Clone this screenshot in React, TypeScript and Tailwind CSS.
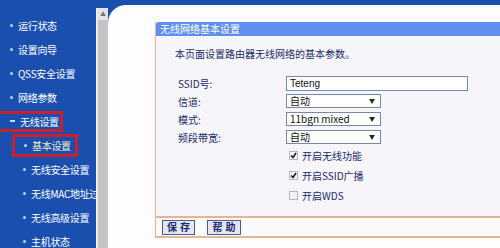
const cjk = { fontFamily: '"Noto Sans CJK SC", "Liberation Sans", sans-serif' };

const menu = [
  { label: '运行状态', level: 0 },
  { label: '设置向导', level: 0 },
  { label: 'QSS安全设置', level: 0 },
  { label: '网络参数', level: 0 },
  { label: '无线设置', level: 0, open: true, boxed: true },
  { label: '基本设置', level: 1, boxed: true, active: true },
  { label: '无线安全设置', level: 1 },
  { label: '无线MAC地址过滤', level: 1 },
  { label: '无线高级设置', level: 1 },
  { label: '主机状态', level: 1 },
];

function Sidebar() {
  return (
    <div className="w-[96px] shrink-0 bg-[#1a4fb0] pt-[13px] overflow-hidden">
      {menu.map((item) => {
        const marker = item.open ? (
          <span className="w-[5px] h-[2px] bg-[#cfe0ff] shrink-0" />
        ) : (
          <span className="w-[3px] h-[3px] rounded-full bg-[#bcd6ff] shrink-0" />
        );
        const inner = (
          <span className={`flex items-center gap-[5px] ${item.level ? 'pl-[9px]' : 'pl-[10px]'}`}>
            {marker}
            <span className={`whitespace-nowrap tracking-[-0.3px] ${item.active ? 'text-[#f4f0c0]' : 'text-white'}`}>{item.label}</span>
          </span>
        );
        return (
          <div key={item.label} className={`h-6 flex items-center ${item.level ? 'pl-[14px]' : ''}`}>
            {item.boxed ? (
              <span
                className={`flex items-center border-[3px] border-[#c8202c] ${
                  item.level ? 'w-[66px] h-[23px] -ml-[2px]' : 'w-[66px] h-[21px] -ml-[3px]'
                }`}
              >
                {inner}
              </span>
            ) : (
              inner
            )}
          </div>
        );
      })}
    </div>
  );
}

function Scrollbar() {
  return (
    <div className="w-[12px] shrink-0 bg-[#1a4fb0] flex flex-col pt-[8px]">
      <div className="flex-1 flex flex-col bg-[#d6d6d6] border-l-[2px] border-[#ececec]">
        <div className="h-[12px] flex items-center justify-center bg-[#e4e4e4]">
          <span className="text-[6px] leading-none text-[#777]">▲</span>
        </div>
        <div className="flex-1 bg-[#c4c4c4]" />
      </div>
    </div>
  );
}

function Select({ value }: { value: string }) {
  return (
    <div className="w-[95px] h-[14px] bg-white border border-[#7888a8] flex items-center justify-between pl-[3px] pr-[5px]">
      <span className="text-[10px] leading-none text-[#111]" style={cjk}>{value}</span>
      <span className="text-[6px] leading-none text-[#222]">▼</span>
    </div>
  );
}

function Check({ checked, label }: { checked: boolean; label: string }) {
  return (
    <div className="h-5 flex items-center gap-[4px]">
      <span className="w-[9px] h-[9px] bg-[#f2f2f2] border border-[#b8b8b8] flex items-center justify-center">
        {checked && (
          <svg width="7" height="7" viewBox="0 0 7 7">
            <path d="M1 3.5 L3 5.5 L6 1" stroke="#222" strokeWidth="1.6" fill="none" />
          </svg>
        )}
      </span>
      <span className="text-[10px] text-[#1c2a6a]">{label}</span>
    </div>
  );
}

function Panel() {
  const labelCls = 'text-[10px] text-[#1c2a6a] pl-[22px] flex items-center';
  return (
    <div className="ml-[47px] mt-[17px] w-[400px] flex flex-col border-l border-[#e6b48e] bg-[#f6f6fa]" style={cjk}>
      <div className="h-[14px] bg-[#5f90f0] rounded-tl-[3px] flex items-center pl-[4px]">
        <span className="text-[10px] leading-none text-white">无线网络基本设置</span>
      </div>
      <div className="pl-[19px] pt-[10px] h-[16px] text-[10px] leading-[16px] text-[#1c2a6a]">
        本页面设置路由器无线网络的基本参数。
      </div>
      <div className="mt-[24px] grid grid-cols-[130px_1fr] gap-y-[3px]">
        <div className={labelCls}>SSID号:</div>
        <div className="w-[182px] h-[15px] bg-white border border-[#7888a8] flex items-center pl-[3px]">
          <span className="text-[10px] leading-none text-[#111]" style={{ fontFamily: '"Liberation Sans", sans-serif' }}>Teteng</span>
        </div>
        <div className={labelCls}>信道:</div>
        <Select value="自动" />
        <div className={labelCls}>模式:</div>
        <Select value="11bgn mixed" />
        <div className={labelCls}>频段带宽:</div>
        <Select value="自动" />
      </div>
      <div className="pl-[133px] flex flex-col">
        <Check checked label="开启无线功能" />
        <Check checked label="开启SSID广播" />
        <Check checked={false} label="开启WDS" />
      </div>
      <div className="mt-[11px] border-t-[2px] border-[#e6b48e] bg-[#fafafa] h-[20px] flex items-center gap-[12px] pl-[6px]">
        <button className="w-[33px] h-[15px] bg-[#e2e6f4] border border-[#4c5a92] text-[10px] leading-none tracking-[3px] pl-[3px] text-[#1c2a6a] font-bold">
          保存
        </button>
        <button className="w-[34px] h-[15px] bg-[#e2e6f4] border border-[#4c5a92] text-[10px] leading-none tracking-[3px] pl-[3px] text-[#1c2a6a] font-bold">
          帮助
        </button>
      </div>
      <div className="border-t-[2px] border-[#e6b48e]" />
    </div>
  );
}

export default function App() {
  return (
    <div className="w-[500px] h-[248px] flex overflow-hidden bg-white" style={cjk}>
      <div className="flex text-[10px]">
        <Sidebar />
      </div>
      <Scrollbar />
      <div className="flex-1 bg-[#1a4fb0] pt-[5px] overflow-hidden">
        <div className="h-full bg-[#fdfdfd] rounded-tl-[18px] overflow-hidden">
          <Panel />
        </div>
      </div>
    </div>
  );
}
